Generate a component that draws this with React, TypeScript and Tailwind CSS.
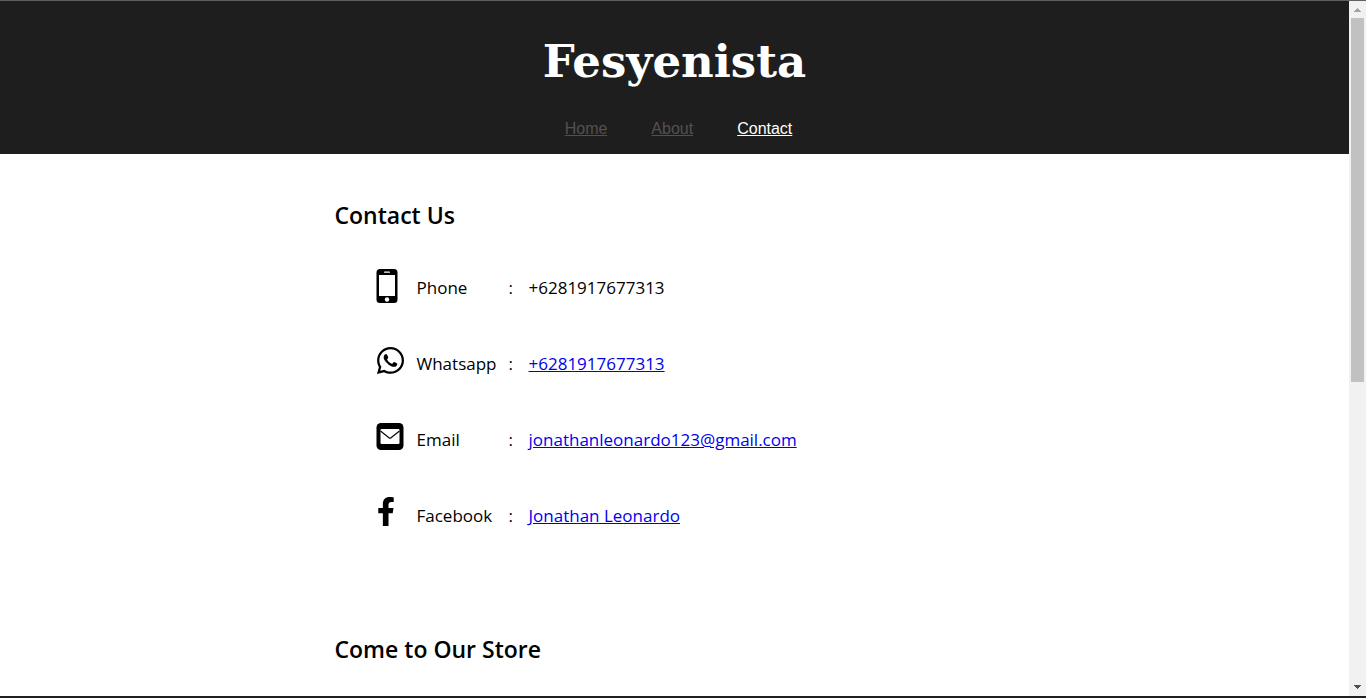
import type { ReactNode } from "react";
import { FaFacebookF, FaWhatsapp } from "react-icons/fa";

type ContactRow = {
  label: string;
  value: string;
  href?: string;
  icon: ReactNode;
};

const navLinks = [
  { label: "Home", active: false },
  { label: "About", active: false },
  { label: "Contact", active: true },
];

const contacts: ContactRow[] = [
  {
    label: "Phone",
    value: "+6281917677313",
    icon: (
      <>
        <rect x="0.5" y="1" width="21" height="34" rx="3.5" fill="#000" />
        <rect x="3" y="7" width="16" height="21" fill="#fff" />
        <rect x="8" y="3.6" width="6" height="1.2" rx="0.6" fill="#fff" />
        <circle cx="11" cy="31.5" r="2.2" fill="#fff" />
      </>
    ),
  },
  {
    label: "Whatsapp",
    value: "+6281917677313",
    href: "#whatsapp",
    icon: <FaWhatsapp x="1" y="1" className="h-[31px] w-[27px]" />,
  },
  {
    label: "Email",
    value: "jonathanleonardo123@gmail.com",
    href: "#email",
    icon: (
      <>
        <rect x="0.5" y="3" width="27" height="27" rx="4.5" fill="#000" />
        <rect x="4.5" y="9" width="19" height="15" rx="1" fill="#fff" />
        <path d="M4.5 11 L13 17.8 Q14 18.6 15 17.8 L23.5 11" fill="none" stroke="#000" strokeWidth="1.1" />
      </>
    ),
  },
  {
    label: "Facebook",
    value: "Jonathan Leonardo",
    href: "#facebook",
    icon: <FaFacebookF x="1" y="1" className="h-[29px] w-[18px]" />,
  },
];

function Header() {
  return (
    <header className="flex h-[153px] flex-col items-center bg-[#1e1e1e] pt-8">
      <h1 className="font-['DejaVu_Serif',serif] text-[45px] leading-[58px] font-bold text-white">Fesyenista</h1>
      <nav className="mt-[26px] flex gap-11 pl-2 font-['Liberation_Sans',sans-serif] text-base underline">
        {navLinks.map((link) => (
          <a
            key={link.label}
            href={`#${link.label.toLowerCase()}`}
            className={link.active ? "text-white" : "text-[#555050]"}
          >
            {link.label}
          </a>
        ))}
      </nav>
    </header>
  );
}

function ContactTable() {
  return (
    <table className="mt-[19px] ml-10 text-[17px] leading-6">
      <tbody>
        {contacts.map((contact) => (
          <tr key={contact.label} className="h-[76px]">
            <td className="w-[42px] pb-1 pl-px">
              <svg width="32" height="36" viewBox="0 0 32 36" aria-hidden="true">
                {contact.icon}
              </svg>
            </td>
            <th scope="row" className="w-[92px] text-left font-normal">
              {contact.label}
            </th>
            <td className="w-5">:</td>
            <td>
              {contact.href ? (
                <a href={contact.href} className="text-[#0000ee] underline">
                  {contact.value}
                </a>
              ) : (
                contact.value
              )}
            </td>
          </tr>
        ))}
      </tbody>
    </table>
  );
}

function Scrollbar() {
  return (
    <div className="flex w-[17px] shrink-0 flex-col items-center bg-[#f1f1f1]" aria-hidden="true">
      <svg className="h-[17px] w-[17px]" viewBox="0 0 17 17" shapeRendering="crispEdges">
        <path d="M5 11h7v-1h-1v-1h-1v-1h-1v-1h-1v1h-1v1h-1v1h-1z" fill="#a3a3a3" />
      </svg>
      <div className="flex w-full grow flex-col px-0.5">
        <div className="h-[55%] bg-[#c1c1c1]" />
      </div>
      <svg className="h-[17px] w-[17px]" viewBox="0 0 17 17" shapeRendering="crispEdges">
        <path d="M5 6h7v1h-1v1h-1v1h-1v1h-1v-1h-1v-1h-1v-1h-1z" fill="#505050" />
      </svg>
    </div>
  );
}

export default function App() {
  return (
    <div className="flex h-screen flex-col border-t border-b-2 border-t-[#5f6063] border-b-[#1f2024] bg-white">
      <div className="flex min-h-0 grow">
        <div className="min-w-0 grow overflow-hidden">
          <Header />
          <main className="mx-auto max-w-[680px] pt-[45px] font-['Open_Sans',sans-serif] text-black">
            <section>
              <h2 className="text-[23px] leading-8 font-semibold">Contact Us</h2>
              <ContactTable />
            </section>
            <section className="mt-[79px]">
              <h2 className="text-[23px] leading-8 font-semibold">Come to Our Store</h2>
            </section>
          </main>
        </div>
        <Scrollbar />
      </div>
    </div>
  );
}
